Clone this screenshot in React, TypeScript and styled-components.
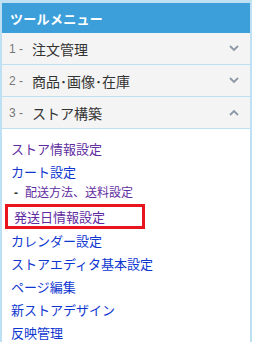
import styled, {createGlobalStyle} from "styled-components";

const GlobalStyle = createGlobalStyle`
  html, body {
    margin: 0;
    padding: 0;
    background: #ffffff;
  }
  body {
    font-family: "Noto Sans CJK JP", "Liberation Sans", sans-serif;
  }
`;

const Panel = styled.div`
  width: 248px;
  height: 339px;
  border-top: 3px solid #bfe0f3;
  border-left: 2px solid #bfe0f3;
  border-right: 2px solid #bfe0f3;
  background: #ffffff;
  overflow: hidden;
`;

const Header = styled.div`
  height: 30px;
  background: #3d9fda;
  color: #ffffff;
  font-size: 13px;
  font-weight: bold;
  display: flex;
  align-items: center;
  padding-left: 8px;
  letter-spacing: 0.3px;
`;

const Row = styled.div`
  height: 31px;
  background: #f4f4f4;
  border-bottom: 1px solid #bfe0f3;
  display: flex;
  align-items: center;
  padding: 0 8px 0 7px;
`;

const Num = styled.span`
  color: #777777;
  font-size: 12px;
  width: 23px;
  white-space: pre;
  font-family: "Liberation Sans", sans-serif;
`;

const Label = styled.span`
  flex: 1;
  color: #333333;
  font-size: 14px;
`;

const Chevron = styled.svg`
  width: 10px;
  height: 7px;
  margin-right: 3px;
`;

const List = styled.div`
  padding: 8px 0 0 9px;
`;

const Link = styled.a<{$visited?: boolean}>`
  display: block;
  font-size: 13px;
  line-height: 23px;
  height: 23px;
  color: ${p => (p.$visited ? "#5f2d9f" : "#0f37d0")};
  text-decoration: none;
  white-space: nowrap;
`;

const SubLink = styled(Link)`
  font-size: 12px;
  line-height: 18px;
  height: 18px;
  padding-left: 3px;
`;

const Dash = styled.span`
  display: inline-block;
  width: 11px;
  font-family: "Liberation Sans", sans-serif;
  font-weight: bold;
  color: #333333;
`;

const Marked = styled.div`
  width: 128px;
  height: 19px;
  margin: 3px 0 0 -6px;
  border: 3px solid #e8141e;
  padding-left: 6px;
  display: flex;
  align-items: center;
  font-size: 13px;
  color: #5f2d9f;
  white-space: nowrap;
`;

const ChevronIcon = ({up}: {up?: boolean}) => (
  <Chevron viewBox="0 0 10 7">
    <polyline
      points={up ? "1,6 5,2 9,6" : "1,1 5,5 9,1"}
      fill="none"
      stroke="#8c98a8"
      strokeWidth="1.8"
    />
  </Chevron>
);

const sections = [
  {n: "1", label: "注文管理", open: false},
  {n: "2", label: "商品･画像･在庫", open: false},
  {n: "3", label: "ストア構築", open: true},
];

export default function App() {
  return (
    <>
      <GlobalStyle/>
      <Panel>
        <Header>ツールメニュー</Header>
        {sections.map(s => (
          <Row key={s.n}>
            <Num>{s.n} - </Num>
            <Label>{s.label}</Label>
            <ChevronIcon up={s.open}/>
          </Row>
        ))}
        <List>
          <Link $visited>ストア情報設定</Link>
          <Link>カート設定</Link>
          <SubLink $visited><Dash>-</Dash>配送方法、送料設定</SubLink>
          <Marked>発送日情報設定</Marked>
          <Link>カレンダー設定</Link>
          <Link>ストアエディタ基本設定</Link>
          <Link>ページ編集</Link>
          <Link>新ストアデザイン</Link>
          <Link>反映管理</Link>
        </List>
      </Panel>
    </>
  );
}
